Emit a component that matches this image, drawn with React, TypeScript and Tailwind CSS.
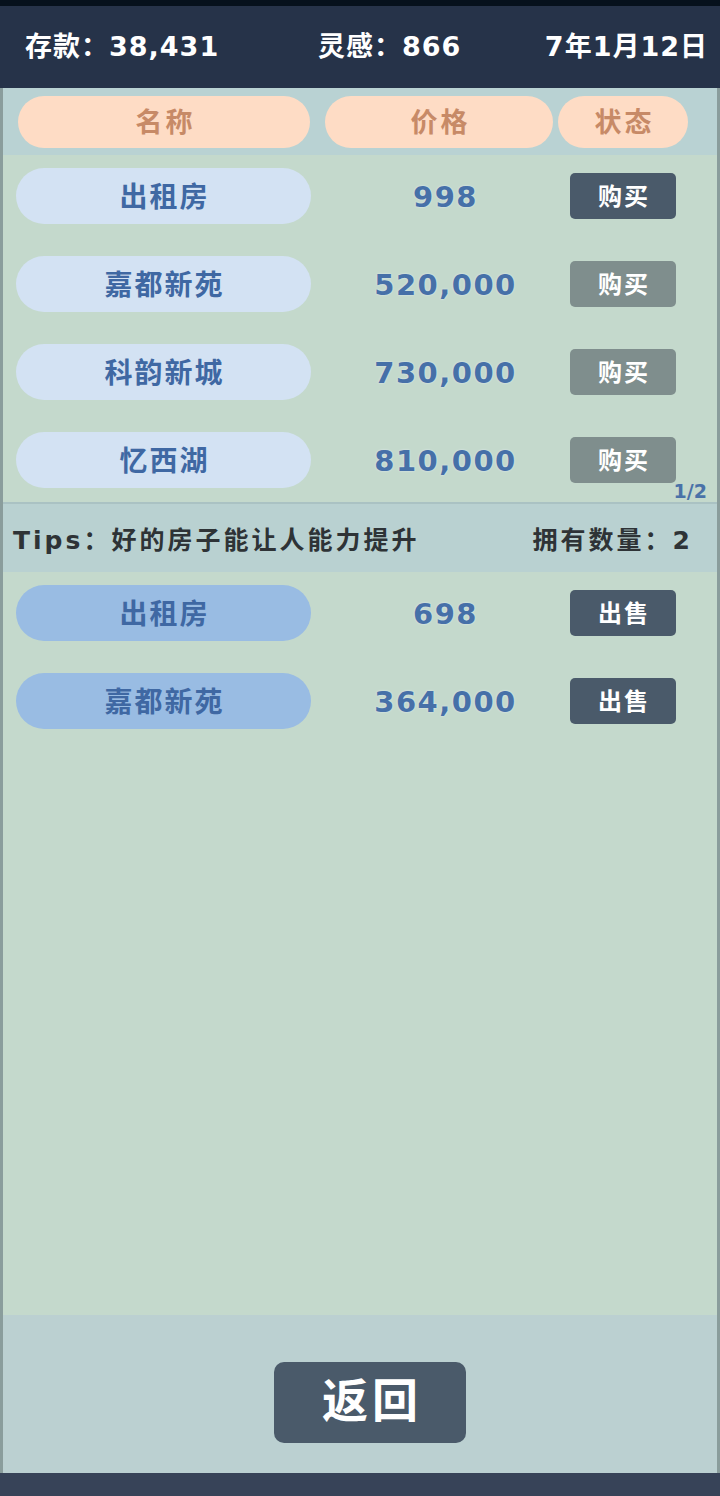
import React from 'react';

const font = { fontFamily: '"DejaVu Sans", "Noto Sans CJK SC", sans-serif' };

type Row = { name: string; price: string; action: string; enabled: boolean };

const shopRows: Row[] = [
  { name: '出租房', price: '998', action: '购买', enabled: true },
  { name: '嘉都新苑', price: '520,000', action: '购买', enabled: false },
  { name: '科韵新城', price: '730,000', action: '购买', enabled: false },
  { name: '忆西湖', price: '810,000', action: '购买', enabled: false },
];

const ownedRows: Row[] = [
  { name: '出租房', price: '698', action: '出售', enabled: true },
  { name: '嘉都新苑', price: '364,000', action: '出售', enabled: true },
];

const HouseRow: React.FC<{ row: Row; owned?: boolean }> = ({ row, owned }) => (
  <div className="flex items-center h-[56px]">
    <div
      className={`ml-[13px] w-[295px] h-[56px] rounded-full flex items-center justify-center pl-[2px] pt-[3px] text-[28px] tracking-[2px] font-bold text-[#3f68a3] ${
        owned ? 'bg-[#99bce3]' : 'bg-[#d3e2f3]'
      }`}
    >
      {row.name}
    </div>
    <div className="flex-1 flex justify-center pl-[10px] pt-[3px] text-[29px] tracking-[1.5px] font-bold text-[#4670a8] [text-shadow:0_0_2px_#e6eef8]">
      {row.price}
    </div>
    <button
      className={`mr-[41px] w-[106px] h-[46px] rounded-[5px] flex items-center justify-center pl-[2px] pt-[2px] text-[24px] tracking-[2px] font-bold text-white ${
        row.enabled ? 'bg-[#4a5a6a]' : 'bg-[#7f8e8d]'
      }`}
    >
      {row.action}
    </button>
  </div>
);

export default function App() {
  return (
    <div className="w-[720px] h-[1496px] flex flex-col" style={font}>
      <div className="h-[6px] bg-[#06111c]" />
      <div className="h-[82px] bg-[#263349] flex items-center text-white text-[27px] tracking-[1px] font-bold">
        <div className="w-[318px] pl-[25px]">存款：38,431</div>
        <div className="flex-1">灵感：866</div>
        <div className="pr-[12px]">7年1月12日</div>
      </div>

      <div className="flex-1 flex flex-col border-x-[3px] border-[#8a9d9c]">
        <div className="h-[67px] bg-[#b9d2d3] flex items-center text-[27px] tracking-[3px] font-bold text-[#c78a67]">
          <div className="ml-[15px] w-[292px] h-[52px] pl-[3px] pt-[3px] rounded-full bg-[#fedcc5] flex items-center justify-center">名称</div>
          <div className="ml-[15px] w-[228px] h-[52px] pl-[3px] pt-[3px] rounded-full bg-[#fedcc5] flex items-center justify-center">价格</div>
          <div className="ml-[5px] w-[130px] h-[52px] pl-[3px] pt-[3px] rounded-full bg-[#fedcc5] flex items-center justify-center">状态</div>
        </div>

        <div className="relative h-[347px] bg-[#c4d9cc] pt-[13px] flex flex-col gap-[32px]">
          {shopRows.map((r) => (
            <HouseRow key={r.name} row={r} />
          ))}
          <span className="absolute right-[10px] bottom-[-3px] text-[19px] font-bold text-[#4a72a8]">1/2</span>
        </div>

        <div className="h-[70px] bg-[#b9d1d1] border-t-2 border-[#aac2c3] flex items-center justify-between pl-[10px] pr-[24px] pt-[5px] text-[25px] tracking-[3px] font-bold text-[#2e3336]">
          <span>Tips：好的房子能让人能力提升</span>
          <span>拥有数量：2</span>
        </div>

        <div className="flex-1 bg-[#c4d9cc] pt-[13px] flex flex-col gap-[32px]">
          {ownedRows.map((r) => (
            <HouseRow key={r.name} row={r} owned />
          ))}
        </div>

        <div className="h-[158px] bg-[#bbd0d1] flex items-center justify-center pt-[16px]">
          <button className="w-[192px] h-[81px] rounded-[10px] bg-[#4a5a6a] text-white text-[46px] tracking-[4px] pl-[4px] font-bold ml-[20px] pb-[2px]">
            返回
          </button>
        </div>
      </div>

      <div className="h-[23px] bg-[#374358]" />
    </div>
  );
}
